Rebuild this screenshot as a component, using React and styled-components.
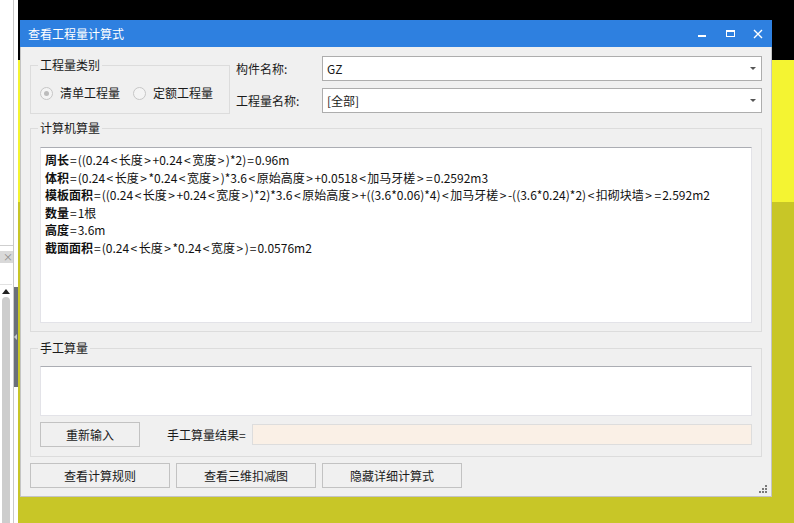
import React from 'react';
import styled, { createGlobalStyle } from 'styled-components';

const GlobalStyle = createGlobalStyle`
    html, body {
        margin: 0;
        padding: 0;
        background: #fff;
    }
    * {
        box-sizing: border-box;
    }
`;

const uiFont = `"Noto Sans CJK SC", "Microsoft YaHei", "Noto Sans", sans-serif`;

const Desktop = styled.div`
    display: flex;
    width: 794px;
    height: 523px;
    overflow: hidden;
    font-family: ${uiFont};
    font-size: 12px;
    color: #1a1a1a;
`;

/* ---- left docked panel of the host program ---- */

const LeftStrip = styled.div`
    display: flex;
    width: 18px;
    flex-shrink: 0;
    background: #fff;
`;

const SidePanel = styled.div`
    display: flex;
    flex-direction: column;
    width: 14px;
    border-right: 1px solid #c9c9c9;
`;

const PanelTop = styled.div`
    height: 246px;
    border-bottom: 1px solid #cfcfcf;
`;

const TabHead = styled.div`
    display: flex;
    align-items: center;
    height: 12px;
    margin-top: 5px;
    padding-left: 3px;
    background: #d9d9d9;
    color: #8a8a8a;
    font-size: 10px;
    line-height: 12px;
`;

const TabBody = styled.div`
    display: flex;
    flex-direction: column;
    flex: 1;
    padding-top: 21px;
`;

const ScrollArea = styled.div`
    display: flex;
    flex-direction: column;
    align-items: center;
    flex: 1;
    width: 12px;
    padding-top: 4px;
    border-top: 1px solid #e2e2e2;
`;

const UpArrow = styled.div`
    width: 0;
    height: 0;
    border-left: 4px solid transparent;
    border-right: 4px solid transparent;
    border-bottom: 5px solid #222;
`;

const Thumb = styled.div`
    flex: 1;
    width: 8px;
    margin-top: 3px;
    border-radius: 4px 4px 0 0;
    background: #cdcdcd;
`;

const Splitter = styled.div`
    display: flex;
    align-items: center;
    width: 4px;
    height: 100px;
    margin-top: 287px;
    background: #6b7079;

    &::before {
        content: '';
        width: 0;
        height: 0;
        border-top: 3px solid transparent;
        border-bottom: 3px solid transparent;
        border-right: 3px solid #c9ccd2;
    }
`;

/* ---- desktop and window ---- */

const Stage = styled.div`
    flex: 1;
    padding: 20px 22px 26px 2px;
    background: linear-gradient(
        to bottom,
        #000 0,
        #000 60px,
        #f4f432 60px,
        #f4f432 202px,
        #c8c627 202px
    );
`;

const Window = styled.div`
    display: flex;
    flex-direction: column;
    width: 752px;
    height: 477px;
`;

const TitleBar = styled.div`
    display: flex;
    align-items: center;
    height: 27px;
    padding-left: 8px;
    background: #2e80e0;
    color: #fff;
    font-size: 12px;
`;

const Title = styled.div`
    flex: 1;
    line-height: 14px;
`;

const CaptionButton = styled.div`
    display: flex;
    align-items: center;
    justify-content: center;
    width: 28px;
    height: 27px;
`;

const Body = styled.div`
    position: relative;
    display: flex;
    flex-direction: column;
    flex: 1;
    padding: 9px 9px 0 9px;
    background: #f0f0f0;
    border: 1px solid #c4c4c4;
    border-top: none;
`;

const TopRow = styled.div`
    display: flex;
    gap: 6px;
    height: 58px;
`;

const Group = styled.fieldset`
    margin: ${p => p.$top || 0}px 0 0 0;
    padding: ${p => p.$padTop || 0}px 9px 0 9px;
    width: ${p => p.$width ? `${p.$width}px` : 'auto'};
    height: ${p => p.$height}px;
    min-width: 0;
    border: 1px solid #dcdcdc;
    flex-shrink: 0;
`;

const Legend = styled.legend`
    margin-left: -2px;
    padding: 0 2px;
    height: 18px;
    line-height: 18px;
    font-size: 12px;
    color: #1a1a1a;
`;

const RadioRow = styled.div`
    display: flex;
    align-items: center;
    gap: 13px;
    height: 14px;
`;

const Radio = styled.label`
    display: flex;
    align-items: center;
    gap: 7px;
    line-height: 14px;
`;

const RadioDot = styled.span`
    display: flex;
    align-items: center;
    justify-content: center;
    width: 13px;
    height: 13px;
    border: 1px solid #c6c6c6;
    border-radius: 50%;
    background: #f4f4f4;

    &::after {
        content: '';
        width: 5px;
        height: 5px;
        border-radius: 50%;
        background: ${p => p.$checked ? '#bcbcbc' : 'transparent'};
    }
`;

const FieldGrid = styled.div`
    display: grid;
    flex: 1;
    grid-template-columns: 86px 1fr;
    grid-auto-rows: 25px;
    row-gap: 7px;
    align-items: center;
`;

const FieldLabel = styled.div`
    line-height: 14px;
`;

const Combo = styled.div`
    display: flex;
    align-items: center;
    height: 25px;
    padding: 0 5px 0 4px;
    border: 1px solid #adadad;
    background: #fff;

    span {
        flex: 1;
    }

    &::after {
        content: '';
        width: 0;
        height: 0;
        border-left: 3px solid transparent;
        border-right: 3px solid transparent;
        border-top: 3px solid #555;
    }
`;

const TextBox = styled.div`
    height: ${p => p.$height}px;
    padding: 3px 4px;
    background: #fff;
    border: 1px solid #e3e3e8;
    border-top-color: #abadb3;
    font-size: 12px;
    line-height: 17.5px;
    color: #111;
    white-space: nowrap;
    overflow: hidden;

    b {
        font-weight: 700;
    }
`;

const Sym = styled.span`
    margin: 0 ${p => p.$space}px;
`;

const ManualRow = styled.div`
    display: flex;
    align-items: center;
    margin-top: 6px;
    height: 25px;
`;

const Button = styled.div`
    display: flex;
    align-items: center;
    justify-content: center;
    width: ${p => p.$width}px;
    height: 25px;
    border: 1px solid #c2c2c2;
    background: #f0f0f0;
    line-height: 14px;
    flex-shrink: 0;
`;

const ResultLabel = styled.div`
    margin: 0 6px 0 27px;
    line-height: 14px;
`;

const ResultField = styled.div`
    flex: 1;
    height: 21px;
    background: #faf0e6;
    border: 1px solid #dddddd;
`;

const ButtonRow = styled.div`
    display: flex;
    gap: 6px;
    margin-top: 6px;
`;

const Grip = styled.svg`
    position: absolute;
    right: 3px;
    bottom: 2px;
`;

const formulas = [
    ['周长', '=((0.24<长度>+0.24<宽度>)*2)=0.96m'],
    ['体积', '=(0.24<长度>*0.24<宽度>)*3.6<原始高度>+0.0518<加马牙槎>=0.2592m3'],
    ['模板面积', '=((0.24<长度>+0.24<宽度>)*2)*3.6<原始高度>+((3.6*0.06)*4)<加马牙槎>-((3.6*0.24)*2)<扣砌块墙>=2.592m2'],
    ['数量', '=1根'],
    ['高度', '=3.6m'],
    ['截面面积', '=(0.24<长度>*0.24<宽度>)=0.0576m2'],
];

// the dialog's font draws < > = with wide side bearings
function Expression({ text }) {
    return text.split(/([<>=])/).map((part, i) => {
        if (part === '<' || part === '>') return <Sym key={i} $space={1.5}>{part}</Sym>;
        if (part === '=') return <Sym key={i} $space={1}>{part}</Sym>;
        return part;
    });
}

export default function App() {
    return (
        <>
            <GlobalStyle />
            <Desktop>
                <LeftStrip>
                    <SidePanel>
                        <PanelTop />
                        <TabHead>×</TabHead>
                        <TabBody>
                            <ScrollArea>
                                <UpArrow />
                                <Thumb />
                            </ScrollArea>
                        </TabBody>
                    </SidePanel>
                    <Splitter />
                </LeftStrip>

                <Stage>
                    <Window>
                        <TitleBar>
                            <Title>查看工程量计算式</Title>
                            <CaptionButton>
                                <svg width="9" height="9" viewBox="0 0 9 9">
                                    <rect x="0" y="6" width="8" height="2" fill="#fff" />
                                </svg>
                            </CaptionButton>
                            <CaptionButton>
                                <svg width="9" height="9" viewBox="0 0 9 9">
                                    <rect x="0.5" y="1.5" width="8" height="6" fill="none" stroke="#fff" />
                                    <rect x="0" y="1" width="9" height="2" fill="#fff" />
                                </svg>
                            </CaptionButton>
                            <CaptionButton>
                                <svg width="10" height="10" viewBox="0 0 10 10">
                                    <path d="M1 1 L9 9 M9 1 L1 9" stroke="#fff" strokeWidth="1.4" />
                                </svg>
                            </CaptionButton>
                        </TitleBar>

                        <Body>
                            <TopRow>
                                <Group $width={200} $height={58} $padTop={12}>
                                    <Legend>工程量类别</Legend>
                                    <RadioRow>
                                        <Radio><RadioDot $checked />清单工程量</Radio>
                                        <Radio><RadioDot />定额工程量</Radio>
                                    </RadioRow>
                                </Group>
                                <FieldGrid>
                                    <FieldLabel>构件名称:</FieldLabel>
                                    <Combo><span>GZ</span></Combo>
                                    <FieldLabel>工程量名称:</FieldLabel>
                                    <Combo><span>[全部]</span></Combo>
                                </FieldGrid>
                            </TopRow>

                            <Group $top={5} $height={213} $padTop={10}>
                                <Legend>计算机算量</Legend>
                                <TextBox $height={176}>
                                    {formulas.map(([name, expr]) => (
                                        <div key={name}><b>{name}</b><Expression text={expr} /></div>
                                    ))}
                                </TextBox>
                            </Group>

                            <Group $top={7} $height={118} $padTop={9}>
                                <Legend>手工算量</Legend>
                                <TextBox $height={50} />
                                <ManualRow>
                                    <Button $width={100}>重新输入</Button>
                                    <ResultLabel>手工算量结果=</ResultLabel>
                                    <ResultField />
                                </ManualRow>
                            </Group>

                            <ButtonRow>
                                <Button $width={140}>查看计算规则</Button>
                                <Button $width={140}>查看三维扣减图</Button>
                                <Button $width={140}>隐藏详细计算式</Button>
                            </ButtonRow>

                            <Grip width="9" height="9" viewBox="0 0 9 9">
                                <g fill="#7a7a7a">
                                    <rect x="6" y="0" width="2" height="2" />
                                    <rect x="3" y="3" width="2" height="2" />
                                    <rect x="6" y="3" width="2" height="2" />
                                    <rect x="0" y="6" width="2" height="2" />
                                    <rect x="3" y="6" width="2" height="2" />
                                    <rect x="6" y="6" width="2" height="2" />
                                </g>
                            </Grip>
                        </Body>
                    </Window>
                </Stage>
            </Desktop>
        </>
    );
}
